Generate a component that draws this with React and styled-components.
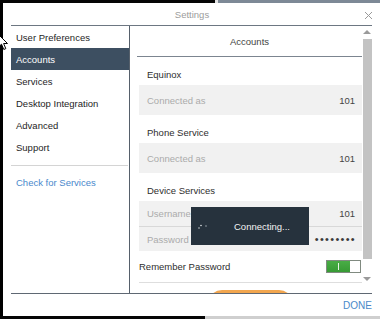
import React from "react";
import styled, { createGlobalStyle } from "styled-components";

const GlobalStyle = createGlobalStyle`
  html, body { margin: 0; padding: 0; background: #fff; }
  body { font-family: "Liberation Sans", Arial, sans-serif; }
  * { box-sizing: border-box; }
`;

const Frame = styled.div`
  position: relative;
  width: 380px;
  height: 319px;
  display: flex;
  flex-direction: column;
  background: #000;
  overflow: hidden;
`;

const Strip = styled.div`
  height: 3px;
  flex: none;
  background: ${(p) => p.$bg};
`;

const Middle = styled.div`
  flex: 1;
  display: flex;
  padding-left: 3px;
  background: #000;
`;

const Window = styled.div`
  position: relative;
  flex: 1;
  background: #fff;
  display: flex;
  flex-direction: column;
`;

const TitleBar = styled.div`
  height: 22px;
  display: grid;
  grid-template-columns: 1fr auto 1fr;
  align-items: center;
  padding: 0 7px 0 8px;
`;

const Title = styled.div`
  grid-column: 2;
  font-size: 9.5px;
  color: #9c9c9c;
`;

const Close = styled.div`
  grid-column: 3;
  justify-self: end;
  display: flex;
  padding-top: 2px;
`;

const Body = styled.div`
  margin: 0 8px;
  height: 269px;
  border-top: 1px solid #6d7782;
  border-bottom: 1px solid #5f6873;
  display: flex;
`;

const Sidebar = styled.div`
  width: 119px;
  flex: none;
  border-right: 1px solid #56606b;
  display: flex;
  flex-direction: column;
`;

const NavItem = styled.div`
  height: 22px;
  display: flex;
  align-items: center;
  padding-left: 5px;
  font-size: 9.5px;
  color: ${(p) => (p.$active ? "#ffffff" : "#1e1e1e")};
  background: ${(p) => (p.$active ? "#3d4f61" : "transparent")};
`;

const SideDivider = styled.div`
  height: 1px;
  margin: 7px 1px 0 0;
  background: #d4d4d4;
`;

const LinkItem = styled(NavItem)`
  margin-top: 5px;
  color: #4a88cc;
`;

const Main = styled.div`
  flex: 1;
  display: flex;
  min-width: 0;
`;

const Content = styled.div`
  flex: 1;
  overflow: hidden;
  padding-left: 7px;
  display: flex;
  flex-direction: column;
`;

const PanelHeader = styled.div`
  flex: none;
  height: 31px;
  border-bottom: 1px solid #7c8590;
  display: flex;
  align-items: center;
  justify-content: center;
  font-size: 9.5px;
  color: #444;
`;

const Sections = styled.div`
  padding-left: 2px;
  display: flex;
  flex-direction: column;
`;

const Label = styled.div`
  height: 28px;
  display: flex;
  align-items: flex-end;
  padding-bottom: 5px;
  padding-left: 8px;
  font-size: 9.5px;
  color: #2e2e2e;
`;

const Box = styled.div`
  background: #f1f1f1;
  display: flex;
  flex-direction: column;
`;

const Row = styled.div`
  height: ${(p) => p.$h || 30}px;
  display: flex;
  align-items: center;
  justify-content: space-between;
  padding: 0 7px 0 8px;
  font-size: 9.5px;
  border-bottom: ${(p) => (p.$divider ? "1px solid #d8d8d8" : "none")};
`;

const Muted = styled.span`
  color: #ababab;
`;

const Value = styled.span`
  color: #444;
`;

const Dots = styled.span`
  color: #3a3a3a;
  font-size: 11px;
  letter-spacing: 1.3px;
  margin-right: -1px;
`;

const RememberRow = styled.div`
  height: 32px;
  flex: none;
  display: flex;
  align-items: center;
  justify-content: space-between;
  padding-right: 1px;
  border-bottom: 1px solid #dedede;
  font-size: 9.5px;
  color: #2e2e2e;
`;

const Toggle = styled.div`
  width: 35px;
  height: 13px;
  border: 1px solid #808a80;
  display: flex;
  background: #fff;
`;

const ToggleOn = styled.div`
  width: 23px;
  background: linear-gradient(#49ad46, #379a34);
  display: flex;
  align-items: center;
  justify-content: center;
  &::after {
    content: "";
    width: 1px;
    height: 7px;
    background: #e8f5e6;
  }
`;

const OrangeButton = styled.div`
  flex: none;
  align-self: center;
  width: 85px;
  height: 28px;
  margin-top: 7px;
  border-radius: 14px;
  background: #f2a64f;
`;

const ScrollTrack = styled.div`
  width: 10px;
  flex: none;
  display: flex;
  flex-direction: column;
  align-items: center;
`;

const Arrow = styled.div`
  width: 0;
  height: 0;
  margin-top: ${(p) => p.$mt}px;
  border-left: 4px solid transparent;
  border-right: 4px solid transparent;
  ${(p) =>
    p.$down
      ? "border-top: 4px solid #9a9a9a;"
      : "border-bottom: 4px solid #9a9a9a;"}
`;

const Thumb = styled.div`
  width: 9px;
  height: 220px;
  margin-top: 5px;
  margin-left: 1px;
  background: #c3c3c3;
`;

const Footer = styled.div`
  height: 22px;
  display: flex;
  align-items: center;
  justify-content: flex-end;
  padding-right: 8px;
`;

const Done = styled.div`
  font-size: 10px;
  color: #4a89c9;
  padding-top: 1px;
`;

const Toast = styled.div`
  position: absolute;
  left: 188px;
  top: 204px;
  width: 118px;
  height: 38px;
  background: #26323d;
  display: flex;
  align-items: center;
  padding-left: 6px;
`;

const ToastText = styled.span`
  margin-left: 25px;
  font-size: 9.5px;
  color: #f2f2f2;
`;

const Cursor = styled.svg`
  position: absolute;
  left: -2px;
  top: 34px;
`;

const navItems = [
  "User Preferences",
  "Accounts",
  "Services",
  "Desktop Integration",
  "Advanced",
  "Support",
];

export default function App() {
  return (
    <>
      <GlobalStyle />
      <Frame>
        <Strip $bg="linear-gradient(to right, #050505 0 215px, #e4e4e4 215px 218px, #7d8996 218px)" />
        <Middle>
          <Window>
            <TitleBar>
              <Title>Settings</Title>
              <Close>
                <svg width="9" height="9" viewBox="0 0 9 9">
                  <path d="M1 1L8 8M8 1L1 8" stroke="#9a9a9a" strokeWidth="1" />
                </svg>
              </Close>
            </TitleBar>
            <Body>
              <Sidebar>
                {navItems.map((n) => (
                  <NavItem key={n} $active={n === "Accounts"}>
                    {n}
                  </NavItem>
                ))}
                <SideDivider />
                <LinkItem>Check for Services</LinkItem>
              </Sidebar>
              <Main>
                <Content>
                  <PanelHeader>Accounts</PanelHeader>
                  <Sections>
                    <Label>Equinox</Label>
                    <Box>
                      <Row>
                        <Muted>Connected as</Muted>
                        <Value>101</Value>
                      </Row>
                    </Box>
                    <Label>Phone Service</Label>
                    <Box>
                      <Row>
                        <Muted>Connected as</Muted>
                        <Value>101</Value>
                      </Row>
                    </Box>
                    <Label>Device Services</Label>
                    <Box>
                      <Row $h={26} $divider>
                        <Muted>Username</Muted>
                        <Value>101</Value>
                      </Row>
                      <Row $h={24}>
                        <Muted>Password</Muted>
                        <Dots>••••••••</Dots>
                      </Row>
                    </Box>
                    <RememberRow>
                      <span>Remember Password</span>
                      <Toggle>
                        <ToggleOn />
                      </Toggle>
                    </RememberRow>
                    <OrangeButton />
                  </Sections>
                </Content>
                <ScrollTrack>
                  <Arrow $mt={4} />
                  <Thumb />
                  <Arrow $mt={18} $down />
                </ScrollTrack>
              </Main>
            </Body>
            <Footer>
              <Done>DONE</Done>
            </Footer>
            <Toast>
              <svg width="12" height="8" viewBox="0 0 12 8">
                <circle cx="2" cy="6" r="0.8" fill="#c8ccd0" />
                <circle cx="4" cy="3.5" r="0.8" fill="#e0e3e6" />
                <circle cx="9" cy="4" r="0.8" fill="#9aa2aa" />
              </svg>
              <ToastText>Connecting...</ToastText>
            </Toast>
          </Window>
        </Middle>
        <Strip $bg="linear-gradient(to right, #050505 0 205px, #cfcfcf 205px)" />
        <Cursor width="11" height="17" viewBox="0 0 11 17">
          <path
            d="M0.5 0.5L0.5 13L3.5 10.2L5.8 15.5L7.8 14.6L5.6 9.5L9.5 9.5Z"
            fill="#fff"
            stroke="#000"
            strokeWidth="1"
          />
        </Cursor>
      </Frame>
    </>
  );
}
